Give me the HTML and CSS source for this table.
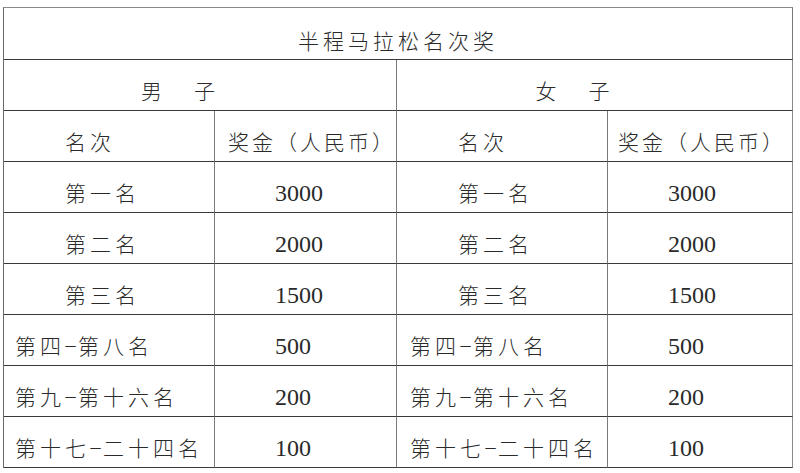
FILE: index.html
```html
<!DOCTYPE html>
<html lang="zh-CN">
<head>
<meta charset="utf-8">
<title>半程马拉松名次奖</title>
<link rel="stylesheet" href="styles.css">
</head>
<body>
<div class="sheet">
  <div class="cell title span4">半程马拉松名次奖</div>

  <div class="cell sex span2">男子</div>
  <div class="cell sex span2 last">女子</div>

  <div class="cell indent">名次</div>
  <div class="cell head">奖金（人民币）</div>
  <div class="cell indent">名次</div>
  <div class="cell head h2 last">奖金（人民币）</div>

  <div class="cell indent">第一名</div>
  <div class="cell num">3000</div>
  <div class="cell indent">第一名</div>
  <div class="cell num last">3000</div>

  <div class="cell indent">第二名</div>
  <div class="cell num">2000</div>
  <div class="cell indent">第二名</div>
  <div class="cell num last">2000</div>

  <div class="cell indent">第三名</div>
  <div class="cell num">1500</div>
  <div class="cell indent">第三名</div>
  <div class="cell num last">1500</div>

  <div class="cell rank"><span>第四</span><span class="dash">-</span><span>第八名</span></div>
  <div class="cell num">500</div>
  <div class="cell rank r2"><span>第四</span><span class="dash">-</span><span>第八名</span></div>
  <div class="cell num last">500</div>

  <div class="cell rank"><span>第九</span><span class="dash">-</span><span>第十六名</span></div>
  <div class="cell num">200</div>
  <div class="cell rank r2"><span>第九</span><span class="dash">-</span><span>第十六名</span></div>
  <div class="cell num last">200</div>

  <div class="cell rank"><span>第十七</span><span class="dash">-</span><span>二十四名</span></div>
  <div class="cell num">100</div>
  <div class="cell rank r2"><span>第十七</span><span class="dash">-</span><span>二十四名</span></div>
  <div class="cell num last">100</div>
</div>
</body>
</html>
```

FILE: styles.css
```css
html, body {
  margin: 0;
  padding: 0;
  background: #ffffff;
}

body {
  padding: 7px 0 0 3px;
  font-family: "Noto Sans CJK SC", "Noto Sans", sans-serif;
  color: #2a2a2a;
}

.sheet {
  display: grid;
  grid-template-columns: 211px 182px 211px 185px;
  grid-template-rows: 52px repeat(8, 51px);
  width: 790px;
  box-sizing: border-box;
  border-top: 1px solid #8a8a8a;
  border-left: 1px solid #6a6a6a;
}

.cell {
  box-sizing: border-box;
  border-right: 1px solid #7a7a7a;
  border-bottom: 1px solid #3a3a3a;
  display: flex;
  align-items: flex-start;
  padding-top: 18px;
  font-size: 21px;
  line-height: 24px;
  letter-spacing: 4px;
  white-space: nowrap;
  font-weight: 300;
}

.span4 { grid-column: span 4; }
.span2 { grid-column: span 2; }

.last { border-right-color: #8a8a8a; }

.title {
  justify-content: center;
  padding-top: 20px;
}

.sex {
  justify-content: center;
  letter-spacing: 32px;
  padding-right: 12px;
}

.head {
  letter-spacing: 3px;
  padding-left: 13px;
}

.head.h2 {
  padding-left: 10px;
}

.indent {
  padding-left: 61px;
}

.rank {
  padding-left: 11px;
}

.rank.r2 {
  padding-left: 13px;
}

.dash {
  display: inline-block;
  width: 13px;
  margin-left: -1px;
  margin-right: 1px;
  text-align: center;
  letter-spacing: 0;
  transform: translateY(-2px) scaleX(2);
}

.num {
  font-family: "Liberation Serif", "Times New Roman", serif;
  font-size: 24px;
  letter-spacing: 0;
  padding-left: 60px;
  padding-top: 19px;
  font-weight: 400;
}
```
